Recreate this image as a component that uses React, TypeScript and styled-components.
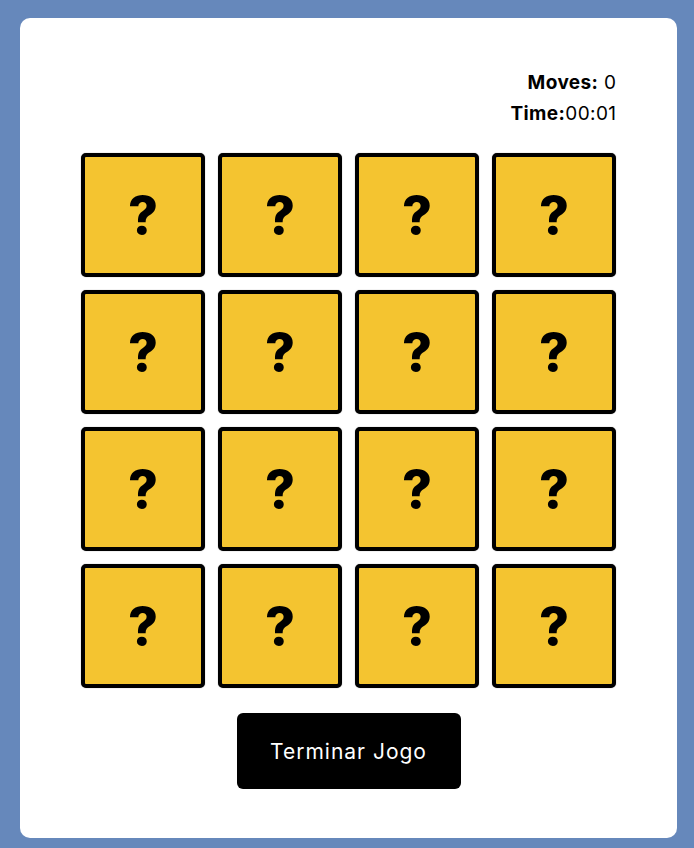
import { createGlobalStyle } from "styled-components";
import styled from "styled-components";

const GlobalStyle = createGlobalStyle`
  html, body {
    margin: 0;
    padding: 0;
    background: #6688bb;
  }
  body {
    padding: 18px 17px 10px 20px;
    font-family: Inter, "Noto Sans", sans-serif;
  }
`;

const Card = styled.main`
  background: #fff;
  border-radius: 10px;
  height: 820px;
  box-sizing: border-box;
  padding: 49px 60px 0;
  display: flex;
  flex-direction: column;
  align-items: center;
`;

const Stats = styled.div`
  align-self: stretch;
  width: 536px;
  margin: 0 auto;
  text-align: right;
  font-size: 19px;
  letter-spacing: 0.4px;
  line-height: 31px;
  color: #000;
`;

const Label = styled.span`
  font-weight: 700;
`;

const Board = styled.div`
  margin-top: 24px;
  display: grid;
  grid-template-columns: repeat(4, 124px);
  gap: 13px;
`;

const Tile = styled.button`
  width: 124px;
  height: 124px;
  box-sizing: border-box;
  border: 4px solid #000;
  border-radius: 5px;
  background: #f4c430;
  box-shadow: 0 0 1px rgba(0, 0, 0, 0.5);
  display: flex;
  align-items: center;
  justify-content: center;
  padding: 0;
  font-family: Inter, "Noto Sans", sans-serif;
  font-size: 52px;
  font-weight: 800;
  color: #000;
  cursor: pointer;
`;

const EndButton = styled.button`
  margin-top: 25px;
  width: 224px;
  height: 76px;
  border: none;
  border-radius: 6px;
  background: #000;
  color: #fff;
  font-family: Inter, "Noto Sans", sans-serif;
  font-size: 21px;
  letter-spacing: 1px;
  cursor: pointer;
`;

export default function App() {
  const tiles = Array.from({ length: 16 }, (_, i) => i);
  return (
    <>
      <GlobalStyle />
      <Card>
        <Stats>
          <div>
            <Label>Moves:</Label> 0
          </div>
          <div>
            <Label>Time:</Label>00:01
          </div>
        </Stats>
        <Board>
          {tiles.map((i) => (
            <Tile key={i}>?</Tile>
          ))}
        </Board>
        <EndButton>Terminar Jogo</EndButton>
      </Card>
    </>
  );
}
